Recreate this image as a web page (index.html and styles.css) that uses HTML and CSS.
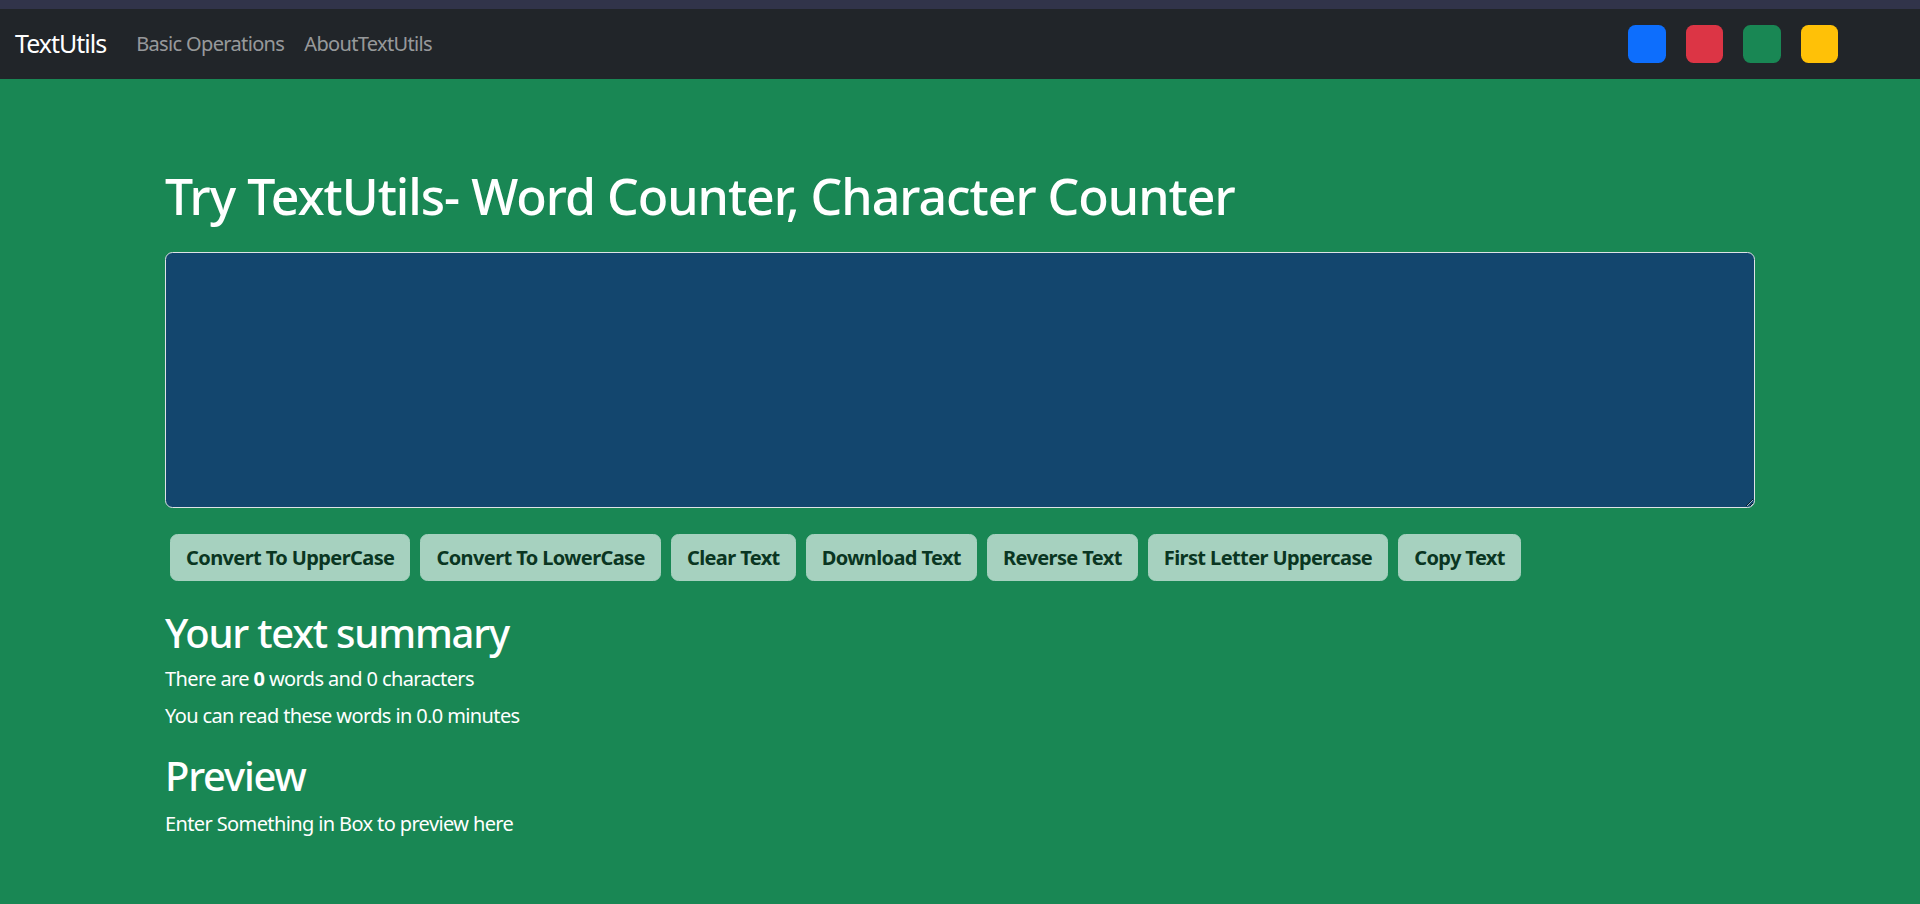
FILE: index.html
```html
<!DOCTYPE html>
<html lang="en">
<head>
<meta charset="utf-8">
<title>TextUtils</title>
<link rel="stylesheet" href="styles.css">
</head>
<body>
<div class="topstrip"></div>
<nav class="navbar">
  <a class="brand" href="#">TextUtils</a>
  <ul class="nav-links">
    <li><a href="#">Basic Operations</a></li>
    <li><a href="#">AboutTextUtils</a></li>
  </ul>
  <div class="swatches">
    <div class="swatch swatch-blue"></div>
    <div class="swatch swatch-red"></div>
    <div class="swatch swatch-green"></div>
    <div class="swatch swatch-yellow"></div>
  </div>
</nav>
<main class="container">
  <h1 class="title">Try TextUtils- Word Counter, Character Counter</h1>
  <textarea class="textbox" rows="8"></textarea>
  <div class="actions">
    <button class="btn">Convert To UpperCase</button>
    <button class="btn">Convert To LowerCase</button>
    <button class="btn">Clear Text</button>
    <button class="btn">Download Text</button>
    <button class="btn">Reverse Text</button>
    <button class="btn">First Letter Uppercase</button>
    <button class="btn">Copy Text</button>
  </div>
  <h2 class="section-title">Your text summary</h2>
  <p class="line">There are <b>0</b> words and 0 characters</p>
  <p class="line">You can read these words in 0.0 minutes</p>
  <h2 class="section-title preview-title">Preview</h2>
  <p class="line">Enter Something in Box to preview here</p>
</main>
</body>
</html>
```
FILE: styles.css
```css
* { box-sizing: border-box; }
html, body { margin: 0; padding: 0; }
body {
  background: #198754;
  color: #ffffff;
  font-family: "Noto Sans", "Open Sans", sans-serif;
  font-size: 20px;
  line-height: 1.5;
  min-height: 904px;
}
.topstrip { height: 9px; background: #31344a; }
.navbar {
  height: 70px;
  background: #212529;
  display: flex;
  align-items: center;
  padding: 0 72px 0 15px;
}
.brand {
  color: #ffffff;
  text-decoration: none;
  font-size: 25px;
  margin-right: 20px;
  letter-spacing: -1px;
}
.nav-links {
  list-style: none;
  display: flex;
  margin: 0;
  padding: 0;
}
.nav-links a {
  display: block;
  padding: 0 10px;
  color: rgba(255,255,255,0.55);
  text-decoration: none;
  font-size: 20px;
  letter-spacing: -0.65px;
}
.swatches {
  margin-left: auto;
  display: flex;
}
.swatch {
  width: 37.5px;
  height: 37.5px;
  border-radius: 7.5px;
  margin: 0 10px;
}
.swatch-blue { background: #0d6efd; }
.swatch-red { background: #dc3545; }
.swatch-green { background: #198754; }
.swatch-yellow { background: #ffc107; }

.container {
  width: 1590px;
  margin: 0 auto;
}
.title {
  font-size: 50px;
  font-weight: 500;
  line-height: 60px;
  margin: 87px 0 26px;
  letter-spacing: -1px;
}
.textbox {
  display: block;
  width: 100%;
  height: 256px;
  background: #13466e;
  border: 1px solid #dee2e6;
  border-radius: 7.5px;
  color: #fff;
  font: inherit;
  padding: 7px 15px;
  resize: vertical;
}
.actions {
  display: flex;
  margin-top: 26px;
}
.btn {
  height: 47px;
  margin: 0 5px;
  padding: 0 15px;
  background: #a6d1bf;
  color: #0a3622;
  border: 1px solid #a6d1bf;
  border-radius: 7.5px;
  font-family: inherit;
  font-size: 20px;
  font-weight: 700;
  letter-spacing: -0.6px;
}
.section-title {
  font-size: 40px;
  font-weight: 500;
  line-height: 48px;
  margin: 28px 0 7px;
  letter-spacing: -1.2px;
}
.preview-title { margin-top: 21px; margin-bottom: 9px; }
.line {
  margin: 0 0 7px;
  line-height: 30px;
  letter-spacing: -0.62px;
}
```
